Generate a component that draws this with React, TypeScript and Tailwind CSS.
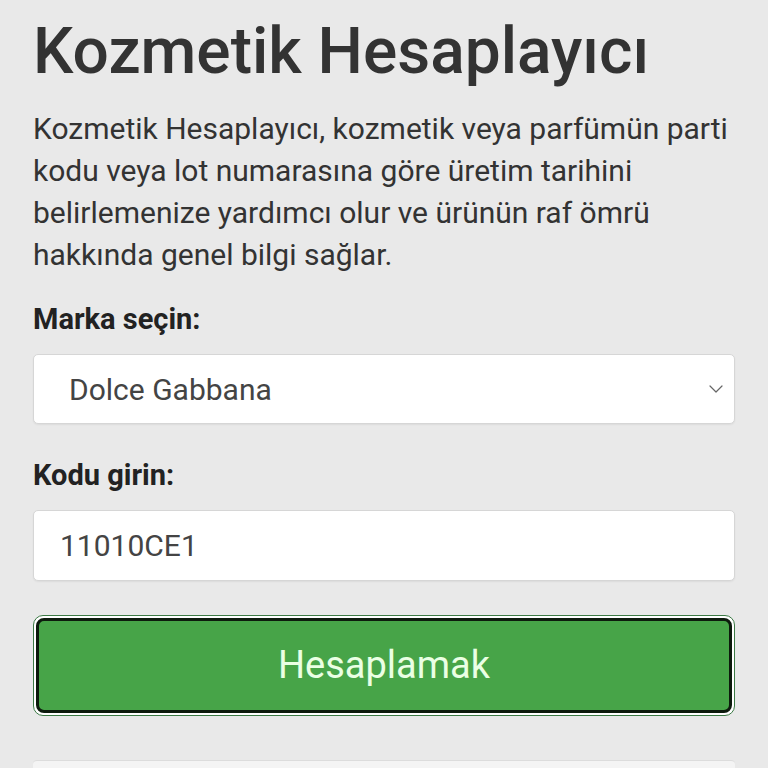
import { ChevronDown } from 'lucide-react'

export default function App() {
  return (
    <div className="min-h-[768px] bg-[#e9e9e9] px-[33px] pt-[14px] text-[#333] font-['Roboto',sans-serif] overflow-hidden">
      <h1 className="text-[64px] font-medium leading-[76px] text-[#333]">Kozmetik Hesaplayıcı</h1>
      <p className="mt-[18px] text-[30px] leading-[42px] text-[#333]">
        Kozmetik Hesaplayıcı, kozmetik veya parfümün parti kodu veya lot numarasına göre üretim tarihini
        belirlemenize yardımcı olur ve ürünün raf ömrü hakkında genel bilgi sağlar.
      </p>

      <label className="mt-[26px] block text-[29px] font-bold leading-[34px] text-[#222]">Marka seçin:</label>
      <div className="mt-[18px] flex h-[70px] items-center justify-between rounded-[5px] border border-[#d6d6d6] bg-white pl-[35px] pr-[6px] shadow-[0_1px_2px_rgba(0,0,0,0.06)]">
        <span className="text-[30px] text-[#444]">Dolce Gabbana</span>
        <ChevronDown className="h-[24px] w-[24px] text-[#666]" strokeWidth={1.2} />
      </div>

      <label className="mt-[34px] block text-[29px] font-bold leading-[34px] text-[#222]">Kodu girin:</label>
      <div className="mt-[18px] flex h-[71px] items-center rounded-[5px] border border-[#d6d6d6] bg-white pl-[26px] shadow-[0_1px_2px_rgba(0,0,0,0.06)]">
        <span className="text-[30px] text-[#444]">11010CE1</span>
      </div>

      <div className="mt-[34px] rounded-[10px] border border-[#3c7a45] bg-white p-[2px]">
        <button className="flex h-[95px] w-full items-center justify-center rounded-[8px] border-[3px] border-[#0d1a0d] bg-[#47a448] text-[38px] text-[#eaffe4]">
          Hesaplamak
        </button>
      </div>

      <div className="mt-[44px] h-[40px] rounded-[4px] border-t border-[#dcdcdc] bg-[#f4f4f4]" />
    </div>
  )
}
